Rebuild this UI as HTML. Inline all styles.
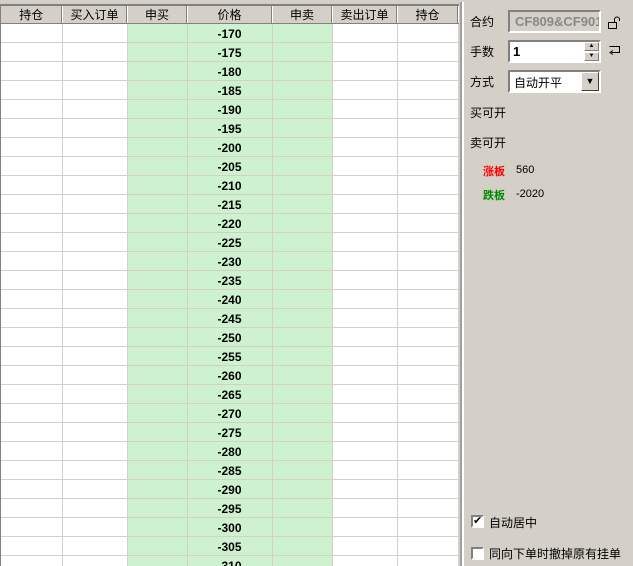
<!DOCTYPE html>
<html><head><meta charset="utf-8"><style>
body{margin:0;width:633px;height:566px;overflow:hidden;background:#d4d0c8;font-family:"Liberation Sans","Noto Sans CJK SC",sans-serif;font-size:12px;position:relative}
#grid{position:absolute;left:0;top:4px;width:459px;height:562px;background:#fff;border-top:2px solid #808080;border-left:1px solid #808080;box-sizing:border-box;overflow:hidden}
table{border-collapse:collapse;table-layout:fixed;position:absolute;left:0;top:0}
td,th{height:18px;border-right:1px solid #d4d0c8;border-bottom:1px solid #d4d0c8;padding:0;text-align:center}
th{background:#d4d0c8;font-weight:normal;border-right:1px solid #fff;border-bottom:1px solid #808080;box-shadow:inset -1px 0 #808080;height:17px}
td.g{background:#cef2d0}
td.p{background:#cef2d0;font-weight:bold;color:#000;font-size:12px;padding-top:1px;height:17px}
#panel{position:absolute;left:462px;top:2px;width:171px;height:564px;border-left:2px solid #fff;box-shadow:-2px 0 #a0a0a0}
.l{position:absolute;left:6px;font-size:12px}
.box{position:absolute;background:#fff;border:2px solid;border-color:#808080 #fff #fff #808080;box-sizing:border-box}
</style></head><body>
<div id="grid"><table>
<colgroup><col style="width:61px"><col style="width:65px"><col style="width:60px"><col style="width:85px"><col style="width:60px"><col style="width:65px"><col style="width:61px"></colgroup>
<tr><th>持仓</th><th>买入订单</th><th>申买</th><th>价格</th><th>申卖</th><th>卖出订单</th><th>持仓</th></tr>
<script>
for(let v=170;v<=310;v+=5){document.write('<tr><td></td><td></td><td class="g"></td><td class="p">-'+v+'</td><td class="g"></td><td></td><td></td></tr>');}
</script>
</table></div>
<div id="panel">
<div class="l" style="top:11px">合约</div>
<div class="box" style="left:44px;top:8px;width:93px;height:23px;background:#d4d0c8;color:#888;font-weight:bold;font-size:13px;padding:2px 0 0 5px;overflow:hidden;white-space:nowrap">CF809&amp;CF901</div>
<svg style="position:absolute;left:143px;top:14px" width="14" height="14"><rect x="1.5" y="6.5" width="8" height="6" fill="none" stroke="#000"/><path d="M7.5 6.5V3.5a2.5 2.5 0 0 1 5 0V5" fill="none" stroke="#000"/></svg>
<div class="l" style="top:41px">手数</div>
<div class="box" style="left:44px;top:38px;width:93px;height:23px;font-weight:bold;font-size:13px;padding:2px 0 0 3px;color:#000">1</div>
<div style="position:absolute;left:120px;top:40px;width:15px;height:9px;background:#d4d0c8;border:1px solid #fff;border-right-color:#808080;border-bottom-color:#808080;box-sizing:border-box;font-size:6px;text-align:center;line-height:7px">▲</div>
<div style="position:absolute;left:120px;top:50px;width:15px;height:9px;background:#d4d0c8;border:1px solid #fff;border-right-color:#808080;border-bottom-color:#808080;box-sizing:border-box;font-size:6px;text-align:center;line-height:7px">▼</div>
<svg style="position:absolute;left:143px;top:43px" width="14" height="12"><path d="M2.5 1.5h10v6h-8M6 5.5l-3 2 3 2" fill="none" stroke="#000"/></svg>
<div class="l" style="top:71px">方式</div>
<div class="box" style="left:44px;top:68px;width:93px;height:23px;padding:2px 0 0 4px">自动开平</div>
<div style="position:absolute;left:117px;top:70px;width:18px;height:19px;background:#d4d0c8;border:1px solid #fff;border-right-color:#404040;border-bottom-color:#404040;box-sizing:border-box;font-size:9px;text-align:center;line-height:17px">▼</div>
<div class="l" style="top:102px">买可开</div>
<div class="l" style="top:132px">卖可开</div>
<div class="l" style="top:161px;left:19px;color:#f00;font-weight:bold;font-size:11px">涨板</div>
<div class="l" style="top:162px;left:52px;color:#000;font-size:11px">560</div>
<div class="l" style="top:185px;left:19px;color:#080;font-weight:bold;font-size:11px">跌板</div>
<div class="l" style="top:186px;left:52px;font-size:11px">-2020</div>
<div class="box" style="left:7px;top:513px;width:13px;height:13px;font-size:11px;line-height:9px;text-align:center">✔</div>
<div class="l" style="top:512px;left:25px">自动居中</div>
<div class="box" style="left:7px;top:545px;width:13px;height:13px"></div>
<div class="l" style="top:543px;left:25px">同向下单时撤掉原有挂单</div>
</div>
</body></html>
